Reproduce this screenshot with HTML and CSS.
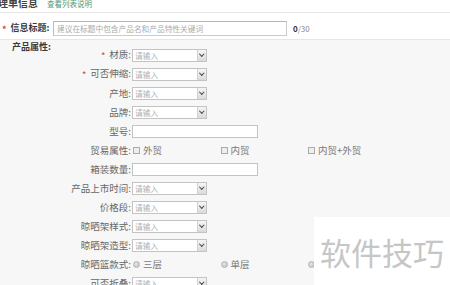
FILE: index.html
```html
<!DOCTYPE html>
<html lang="zh-CN">

<head>
  <meta charset="utf-8">
  <link rel="stylesheet" href="styles.css">
</head>

<body>
  <div class="top">
    <span class="top-text"><b>理单信息</b><a class="top-link">查看列表说明</a></span>
  </div>

  <div class="title-row">
    <label class="title-label" for="title"><span class="req">*</span>信息标题:</label>
    <input type="text" id="title" class="title-input" placeholder="建议在标题中包含产品名和产品特性关键词">
    <span class="count"><b>0</b>/30</span>
  </div>

  <div class="attrs">
    <div class="attrs-label">产品属性:</div>
    <div class="attrs-list">
      <div class="row">
        <label class="lbl"><span class="req">*</span>材质:</label>
        <div class="sel"><span>请输入</span><i class="arrow"></i></div>
      </div>
      <div class="row">
        <label class="lbl"><span class="req">*</span>可否伸缩:</label>
        <div class="sel"><span>请输入</span><i class="arrow"></i></div>
      </div>
      <div class="row">
        <label class="lbl">产地:</label>
        <div class="sel"><span>请输入</span><i class="arrow"></i></div>
      </div>
      <div class="row">
        <label class="lbl">品牌:</label>
        <div class="sel"><span>请输入</span><i class="arrow"></i></div>
      </div>
      <div class="row">
        <label class="lbl">型号:</label>
        <div class="txt"></div>
      </div>
      <div class="row">
        <label class="lbl">贸易属性:</label>
        <div class="opts">
          <span class="opt"><i class="box"></i>外贸</span>
          <span class="opt"><i class="box"></i>内贸</span>
          <span class="opt"><i class="box"></i>内贸+外贸</span>
        </div>
      </div>
      <div class="row">
        <label class="lbl">箱装数量:</label>
        <div class="txt"></div>
      </div>
      <div class="row">
        <label class="lbl">产品上市时间:</label>
        <div class="sel"><span>请输入</span><i class="arrow"></i></div>
      </div>
      <div class="row">
        <label class="lbl">价格段:</label>
        <div class="sel"><span>请输入</span><i class="arrow"></i></div>
      </div>
      <div class="row">
        <label class="lbl">晾晒架样式:</label>
        <div class="sel"><span>请输入</span><i class="arrow"></i></div>
      </div>
      <div class="row">
        <label class="lbl">晾晒架造型:</label>
        <div class="sel"><span>请输入</span><i class="arrow"></i></div>
      </div>
      <div class="row">
        <label class="lbl">晾晒篮款式:</label>
        <div class="opts">
          <span class="opt"><i class="box dot"></i>三层</span>
          <span class="opt"><i class="box dot"></i>单层</span>
          <span class="opt"><i class="box dot"></i></span>
        </div>
      </div>
      <div class="row">
        <label class="lbl">可否折叠:</label>
        <div class="sel"><span>请输入</span><i class="arrow"></i></div>
      </div>
    </div>
  </div>

  <div class="watermark">软件技巧</div>
</body>

</html>
```

FILE: styles.css
```css
html,
body {
  margin: 0;
  height: 100%;
  overflow: hidden;
}

body {
  position: relative;
  font-family: "Noto Sans CJK SC", sans-serif;
  font-size: 9.5px;
  color: #666;
  background: #f7f7f7;
}

/* header strip, cut off at the top */
.top {
  height: 12px;
  background: #fff;
  border-bottom: 1px solid #e6e6e6;
  overflow: hidden;
  line-height: 9px;
}

.top-text {
  display: block;
  margin-top: -2px;
  margin-left: -2px;
  white-space: nowrap;
}

.top-text b {
  font-size: 10px;
  color: #444;
}

.top-link {
  margin-left: 9px;
  font-size: 7.5px;
  color: #4a9a7c;
}

/* title row */
.title-row {
  display: flex;
  align-items: center;
  height: 21px;
  padding: 5px 0 0 2px;
  background: #fff;
  border-bottom: 1px solid #e6e6e6;
}

.title-label {
  width: 51px;
  font-size: 9px;
  font-weight: bold;
  color: #3a3a3a;
  white-space: nowrap;
}

.req {
  margin-right: 4px;
  color: #e03a3a;
  vertical-align: -2px;
}

.title-input {
  width: 234px;
  height: 15px;
  margin: 0;
  padding: 0 3px;
  box-sizing: border-box;
  border: 1px solid #ccc;
  border-top-color: #b5b5b5;
  border-left-color: #bcbcbc;
  font-family: "Noto Sans CJK SC", sans-serif;
  font-size: 7.7px;
  outline: none;
}

.title-input::placeholder {
  color: #aaa;
}

.count {
  margin-left: 6px;
  font-size: 8px;
  color: #888;
}

.count b {
  color: #333;
}

/* product attributes */
.attrs {
  display: flex;
}

.attrs-label {
  width: 50px;
  padding-left: 12px;
  box-sizing: border-box;
  line-height: 13px;
  font-size: 9px;
  font-weight: bold;
  color: #3a3a3a;
  white-space: nowrap;
}

.attrs-list {
  padding-top: 5.5px;
}

.row {
  display: flex;
  align-items: center;
  height: 19px;
}

.lbl {
  width: 81px;
  margin-right: 1px;
  text-align: right;
  line-height: 12px;
  white-space: nowrap;
}

.sel {
  display: flex;
  width: 75px;
  height: 13px;
  box-sizing: border-box;
  border: 1px solid #c3c3c3;
  background: #fff;
}

.sel span {
  flex: 1;
  padding-left: 2px;
  line-height: 11px;
  font-size: 7.7px;
  color: #b0b0b0;
}

.arrow {
  display: flex;
  align-items: center;
  justify-content: center;
  width: 8px;
  border-left: 1px solid #d2d2d2;
  background: linear-gradient(#f5f5f5, #dadada);
}

.arrow::after {
  content: "";
  width: 2.5px;
  height: 2.5px;
  margin-top: -2px;
  border-right: 1.2px solid #444;
  border-bottom: 1.2px solid #444;
  transform: rotate(45deg);
}

.txt {
  width: 126px;
  height: 13px;
  box-sizing: border-box;
  border: 1px solid #c3c3c3;
  background: #fff;
}

.opts {
  display: flex;
  margin-left: 1px;
}

.opt {
  display: flex;
  align-items: center;
  gap: 3px;
  width: 87.5px;
  line-height: 12px;
  color: #777;
  white-space: nowrap;
}

.box {
  width: 7px;
  height: 7px;
  box-sizing: border-box;
  border: 1px solid #aaa;
  background: #eee;
}

.dot {
  border-color: #b5b5b5;
  border-radius: 50%;
  background: radial-gradient(circle at 40% 40%, #e6e6e6, #bbb);
}

/* watermark patch over the corner */
.watermark {
  position: absolute;
  left: 314px;
  top: 217px;
  right: 0;
  bottom: 0;
  display: flex;
  align-items: center;
  padding-left: 6px;
  background: #fff;
  font-size: 31px;
  color: #c6c6c6;
  white-space: nowrap;
}
```
